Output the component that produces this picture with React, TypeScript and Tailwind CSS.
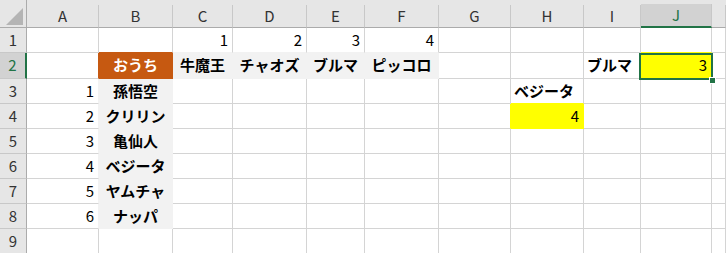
import React from 'react';

type Fill = 'none' | 'orange' | 'gray' | 'yellow';
type Align = 'left' | 'center' | 'right';

interface Cell {
  v: string;
  fill?: Fill;
  align?: Align;
  bold?: boolean;
  white?: boolean;
}

const COLS = ['A', 'B', 'C', 'D', 'E', 'F', 'G', 'H', 'I', 'J', ''];
const WIDTHS = ['w-[72px]', 'w-[74px]', 'w-[60px]', 'w-[74px]', 'w-[58px]', 'w-[74px]', 'w-[72px]', 'w-[73px]', 'w-[57px]', 'w-[71px]', 'w-[14px]'];
const ROWS = [1, 2, 3, 4, 5, 6, 7, 8, 9];

const cells: Record<string, Cell> = {
  C1: { v: '1', align: 'right' },
  D1: { v: '2', align: 'right' },
  E1: { v: '3', align: 'right' },
  F1: { v: '4', align: 'right' },
  B2: { v: 'おうち', fill: 'orange', align: 'center', bold: true, white: true },
  C2: { v: '牛魔王', fill: 'gray', align: 'center', bold: true },
  D2: { v: 'チャオズ', fill: 'gray', align: 'center', bold: true },
  E2: { v: 'ブルマ', fill: 'gray', align: 'center', bold: true },
  F2: { v: 'ピッコロ', fill: 'gray', align: 'center', bold: true },
  I2: { v: 'ブルマ', align: 'left', bold: true },
  J2: { v: '3', fill: 'yellow', align: 'right' },
  H3: { v: 'ベジータ', align: 'left', bold: true },
  H4: { v: '4', fill: 'yellow', align: 'right' },
};

const names = ['孫悟空', 'クリリン', '亀仙人', 'ベジータ', 'ヤムチャ', 'ナッパ'];
names.forEach((n, i) => {
  cells[`A${i + 3}`] = { v: String(i + 1), align: 'right' };
  cells[`B${i + 3}`] = { v: n, fill: 'gray', align: 'center', bold: true };
});

const BG: Record<Fill, string> = {
  none: 'bg-white',
  orange: 'bg-[#c65911]',
  gray: 'bg-[#f2f2f2]',
  yellow: 'bg-[#ffff00]',
};
const BR: Record<Fill, string> = {
  none: 'border-r-[#d4d4d4]',
  orange: 'border-r-[#c65911]',
  gray: 'border-r-[#f2f2f2]',
  yellow: 'border-r-[#ffff00]',
};
const BB: Record<Fill, string> = {
  none: 'border-b-[#d4d4d4]',
  orange: 'border-b-[#c65911]',
  gray: 'border-b-[#f2f2f2]',
  yellow: 'border-b-[#ffff00]',
};
const ALIGN: Record<Align, string> = {
  left: 'justify-start pl-[3px]',
  center: 'justify-center',
  right: 'justify-end pr-[4px]',
};

const fillOf = (c: string, r: number): Fill => cells[`${c}${r}`]?.fill ?? 'none';

const App: React.FC = () => {
  return (
    <div className="w-[726px] h-[253px] overflow-hidden bg-white font-['Noto_Sans_CJK_JP','Noto_Sans',sans-serif] text-[15px] text-black select-none">
      {/* column headers */}
      <div className="flex h-[28px] bg-[#e6e6e6]">
        <div className="w-[27px] h-full border-r border-b border-[#ababab] flex items-end justify-end pr-[3px] pb-[2px]">
          <svg width="17" height="17" viewBox="0 0 17 17">
            <polygon points="17,0 17,17 0,17" fill="#b4b4b4" />
          </svg>
        </div>
        {COLS.map((c, i) => (
          <div key={i} className={`${WIDTHS[i]} h-full flex flex-col`}>
            <div className="h-[5px]" />
            <div
              className={`flex-1 flex items-center justify-center border-r border-r-[#c8c8c8] ${
                c === 'J' ? 'bg-[#d2d2d2] border-b-2 border-b-[#217346] text-[#217346]' : 'border-b border-b-[#ababab] text-[#333]'
              }`}
            >
              {c}
            </div>
          </div>
        ))}
      </div>

      {/* rows */}
      <div className="relative">
        {ROWS.map(r => (
          <div key={r} className={`flex ${r === 2 ? 'h-[26px]' : 'h-[25px]'}`}>
            <div
              className={`w-[27px] h-full flex items-center justify-center border-b border-b-[#c8c8c8] ${
                r === 2 ? 'bg-[#d2d2d2] border-r-2 border-r-[#217346] text-[#217346]' : 'bg-[#e6e6e6] border-r border-r-[#ababab] text-[#333]'
              }`}
            >
              {r}
            </div>
            {COLS.map((c, i) => {
              const key = c ? `${c}${r}` : '';
              const cell = cells[key];
              const own = fillOf(c, r);
              const right = COLS[i + 1] ? fillOf(COLS[i + 1], r) : 'none';
              const below = fillOf(c, r + 1);
              const rFill = own !== 'none' ? own : right;
              const bFill = own !== 'none' ? own : below;
              return (
                <div
                  key={i}
                  className={`${WIDTHS[i]} h-full flex items-center border-r border-b ${BG[own]} ${BR[rFill]} ${BB[bFill]} ${
                    cell ? ALIGN[cell.align ?? 'left'] : ''
                  } ${cell?.bold ? 'font-bold' : ''} ${cell?.white ? 'text-white' : ''} whitespace-nowrap`}
                >
                  {cell?.v}
                </div>
              );
            })}
          </div>
        ))}

        {/* selection on J2 */}
        <div className="absolute left-[639px] top-[25px] w-[74px] h-[27px] border-2 border-[#217346] pointer-events-none" />
        <div className="absolute left-[709px] top-[49px] w-[7px] h-[7px] bg-[#217346] border border-white pointer-events-none" />
      </div>
    </div>
  );
};

export default App;
